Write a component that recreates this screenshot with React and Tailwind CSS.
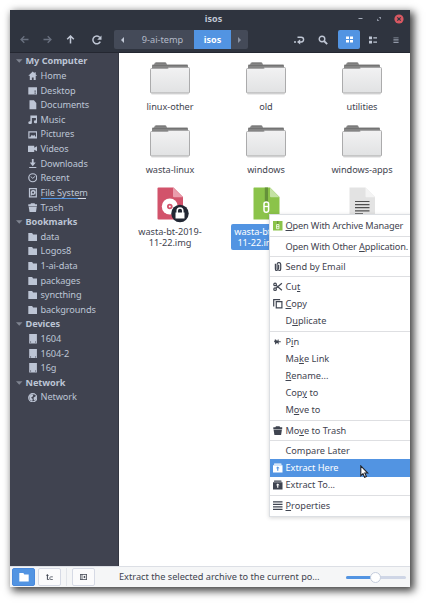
import React from "react";

const Svg = ({ children, className = "", box = "0 0 16 16" }) => (
  <svg viewBox={box} className={"block shrink-0 " + className} fill="currentColor" aria-hidden="true">
    {children}
  </svg>
);

const stroke = { fill: "none", stroke: "currentColor", strokeWidth: 2 };

const glyphs = {
  home: <path d="M8 1L0.500 8H3v7h3.500v-4h3v4H13V8h2.500L13 5.700V2h-2v1.800z" />,
  desktop: <path fillRule="evenodd" d="M.5 2h15v12.500H.5zM11 7.500v2.200h2V7.500zM11 10.800v2.200h2v-2.200z" />,
  documents: <path d="M2.500.5H10l4 4.500V15.500H2.500z" />,
  music: <path fillRule="evenodd" d="M4 1h11.500v10.500a2.800 2.500 0 1 1-2.200-2.400V5H6.500v8a3 2.500 0 1 1-2.500-2.500z" />,
  pictures: <path fillRule="evenodd" d="M.5 2h15v12.500H.5zM2.500 4v8h1l3-4 2 2 2-2 3 4V4z" />,
  videos: <path d="M0 3h10.500v3.500L16 3.500v9l-5.500-3V13.500H0z" />,
  downloads: <path d="M6.500 0h3v6H13l-5 6-5-6h3.500zM2 13.500h12V16H2z" />,
  recent: (
    <g {...stroke}>
      <circle cx="8" cy="8" r="6.700" />
      <path d="M4.500 6L8 9l4-3.500" strokeWidth="1.600" />
    </g>
  ),
  filesystem: (
    <>
      <path fillRule="evenodd" d="M1.500 0h13.500v16H1.500zM3.500 2v12h9.500V2z" />
      <path fillRule="evenodd" d="M8.500 3.200a4.200 4.200 0 1 1-1 8.200L4.500 13.500V7.500a4 4 0 0 1 4-4.300zM8.500 6a1.600 1.600 0 1 0 .1 0z" />
    </>
  ),
  trash: <path d="M5 .3h6l1 1.700h3.500v3.500H.5V2H4zM1.200 6.200h13.600L13.300 16H2.700z" />,
  folder: <path d="M.5 1.500h6.500l1.500 2.500h7V15H.5z" />,
  drive: <path fillRule="evenodd" d="M2 0h13v16H2zM3.500 12.500v1.700h1.700v-1.700zM12 12.500v1.700h1.500v-1.700z" />,
  network: (
    <>
      <circle cx="8" cy="8" r="6.800" {...stroke} />
      <path d="M2 5l4-3 3 1-1 3-3 2 3 2-1 4-4-3zM9.500 7.500l4-2.500 1 4-3 4-2-2z" />
    </>
  ),
};

const places = [
  ["My Computer", [["Home", "home"], ["Desktop", "desktop"], ["Documents", "documents"], ["Music", "music"], ["Pictures", "pictures"], ["Videos", "videos"], ["Downloads", "downloads"], ["Recent", "recent"], ["File System", "filesystem"], ["Trash", "trash"]]],
  ["Bookmarks", [["data", "folder"], ["Logos8", "folder"], ["1-ai-data", "folder"], ["packages", "folder"], ["syncthing", "folder"], ["backgrounds", "folder"]]],
  ["Devices", [["1604", "drive"], ["1604-2", "drive"], ["16g", "drive"]]],
  ["Network", [["Network", "network"]]],
];

function Sidebar() {
  return (
    <aside className="w-[109px] shrink-0 border-r border-[#343742] bg-[#404350] pt-[1px] text-[#bdc5d5]">
      {places.map(([title, items]) => (
        <section key={title}>
          <h2 className="flex h-[14.610px] items-center pl-[6px] text-[9.200px] font-bold tracking-[-0.050px]">
            <Svg box="0 0 7 4" className="mr-[3px] h-[4px] w-[6.500px] text-[#7f8491]"><path d="M0 0h7L3.500 4z" /></Svg>
            {title}
          </h2>
          {items.map(([name, icon]) => (
            <div key={name} className="flex h-[14.610px] items-center pl-[17.500px] tracking-[-0.100px]">
              <Svg className="mr-[3.500px] size-[9.500px]">{glyphs[icon]}</Svg>
              {icon === "filesystem" ? (
                <span className="relative">
                  {name}
                  <span className="absolute bottom-[1px] left-0 flex h-[1px] w-[45px] bg-[#d5dae4]"><span className="w-[37px] bg-[#5294e2]" /></span>
                </span>
              ) : (
                <span>{name}</span>
              )}
            </div>
          ))}
        </section>
      ))}
    </aside>
  );
}

function Header() {
  return (
    <header className="h-[43px] shrink-0 border-b border-[#242731] bg-[#2f343f] text-[#c0c7d5]">
      <div className="relative flex h-[20px] items-center justify-end">
        <h1 className="absolute inset-x-0 top-[3px] pl-[7px] text-center text-[9px] leading-[12px] font-bold">isos</h1>
        <Svg className="mt-[-3px] mr-[14px] size-[5px] text-[#a5acba]" box="0 0 5 5"><path d="M.5 2h4v1h-4z" /></Svg>
        <Svg className="mt-[-3px] mr-[13px] size-[4px] text-[#8f96a4]" box="0 0 5 5"><path d="M2 0h3v3zM0 2l3 3H0z" /></Svg>
        <Svg className="mt-[-3px] mr-[6px] size-[10px]" box="0 0 10 10">
          <circle cx="5" cy="5" r="4.600" fill="#d85862" />
          <path d="M3.300 3.300l3.400 3.400M6.700 3.300L3.300 6.700" stroke="#2f343f" strokeWidth="1.200" />
        </Svg>
      </div>
      <div className="flex h-[19px] items-center">
        <div className="flex w-[104px] items-center">
          <Svg className="ml-[10px] size-[9px] text-[#69707f]" box="0 0 9 9"><path d="M8.500 4.500H1M4.300 1.200L1 4.500l3.300 3.300" {...stroke} strokeWidth="1.300" /></Svg>
          <Svg className="ml-[14px] size-[9px] text-[#69707f]" box="0 0 9 9"><path d="M.5 4.500H8M4.700 1.200L8 4.500 4.700 7.800" {...stroke} strokeWidth="1.300" /></Svg>
          <Svg className="ml-[14px] size-[9px]" box="0 0 9 9"><path d="M4.500 8.500V1M1.200 4.300L4.500 1l3.300 3.300" {...stroke} strokeWidth="1.500" /></Svg>
          <Svg className="ml-[17px] size-[10px]" box="0 0 10 10"><path d="M8.300 6.700a3.900 3.900 0 1 1-.5-4.300" {...stroke} strokeWidth="1.500" /><path d="M9.500.4v4.400H5.200z" /></Svg>
        </div>
        <nav className="flex h-[19px] overflow-hidden rounded-[2px] bg-[#444a58]">
          <span className="flex w-[17px] items-center justify-center"><Svg className="h-[6px] w-[3px]" box="0 0 3 6"><path d="M3 0v6L0 3z" /></Svg></span>
          <span className="flex w-[63px] items-center justify-center text-[#b3bac8]">9-ai-temp</span>
          <span className="flex w-[37px] items-center justify-center bg-[#5294e2] text-[9px] font-bold text-white">isos</span>
          <span className="flex w-[17px] items-center justify-center text-[#8a91a0]"><Svg className="h-[6px] w-[3px]" box="0 0 3 6"><path d="M0 0v6l3-3z" /></Svg></span>
        </nav>
        <Svg className="ml-[46px] h-[10px] w-[11px]" box="0 0 11 10">
          <path d="M3.500 2.200h3.700a2.400 2.400 0 0 1 0 4.800H5.500" {...stroke} strokeWidth="1.400" />
          <path d="M6.200 4.300v5.300L3 7zM0 6.300h2v1.500H0z" />
        </Svg>
        <Svg className="ml-[13px] size-[10px]" box="0 0 10 10">
          <circle cx="4" cy="4" r="2.800" {...stroke} strokeWidth="1.400" /><path d="M6 6l3.200 3.200" {...stroke} strokeWidth="1.800" />
        </Svg>
        <span className="ml-[10px] flex h-[19px] w-[22px] items-center justify-center rounded-[2px] bg-[#5294e2] text-white">
          <Svg className="size-[7px]" box="0 0 7 7"><path d="M0 .5h3v2.500H0zM4 .5h3v2.500H4zM0 4h3v2.500H0zM4 4h3v2.500H4z" /></Svg>
        </span>
        <Svg className="ml-[8.500px] h-[8px] w-[8px]" box="0 0 8 8"><path d="M0 .5h3v2.800H0zM4.300 1.200H8v1.300H4.300zM0 4.700h3v2.800H0zM4.300 5.400H8v1.300H4.300z" /></Svg>
        <Svg className="ml-[16.500px] h-[6px] w-[6px] text-[#9299a8]" box="0 0 6 7"><path d="M0 .5h6v1H0zM0 2.300h6v1H0zM0 4.100h6v1H0zM0 5.900h6v1H0z" /></Svg>
      </div>
    </header>
  );
}

const Folder = () => (
  <Svg className="h-[33px] w-[42px]" box="0 0 42 33">
    <defs>
      <linearGradient id="paper" x1="0" y1="0" x2="0" y2="1"><stop offset="0" stopColor="#f2f2f3" /><stop offset="1" stopColor="#e1e2e3" /></linearGradient>
    </defs>
    <path d="M3 8V3.500q0-1 1-1h1l1-2h11l1 2h20q1 0 1 1V8z" fill="#858585" />
    <path d="M4 3.500h34M7 1h9.500" stroke="#6f6f6f" strokeWidth=".8" />
    <path d="M1.500 7.500q0-1 1-1h16l1.500-1h19.500q1 0 1 1v23.500q0 1-1 1h-37q-1 0-1-1z" fill="url(#paper)" stroke="#a3a3a4" strokeWidth=".9" />
    <path d="M2.500 32h37" stroke="#c9c9c9" strokeWidth=".7" />
  </Svg>
);

const DiskImage = () => (
  <Svg className="h-[36px] w-[42px]" box="0 0 42 36">
    <path d="M9.500.5h15L34 10v21.500q0 1-1 1H9.500q-1 0-1-1v-30q0-1 1-1z" fill="#d2536b" />
    <path d="M24 .5L34 10.300H25q-1 0-1-1z" fill="#ea9dac" />
    <circle cx="20.800" cy="19.500" r="8" fill="#fff" />
    <circle cx="20.800" cy="19.500" r="2.800" fill="#d2536b" /><circle cx="20.800" cy="19.500" r="1" fill="#fff" />
    <circle cx="31" cy="26.500" r="8.700" fill="#222733" />
    <path d="M26.500 25.500h9v6h-9z" fill="#fff" />
    <path d="M28.200 26v-2.200a2.800 2.800 0 0 1 5.600 0V26" fill="none" stroke="#fff" strokeWidth="1.500" />
  </Svg>
);

const Archive = () => (
  <Svg className="h-[36px] w-[42px]" box="0 0 42 36">
    <path d="M9 .5h16L34.500 10v22.500H8.500V1z" fill="#8bc34a" />
    <path d="M25 .5L34.500 10.300H26q-1 0-1-1z" fill="#c4e2a4" />
    <path d="M19.800.5h3.200V15h-3.200z" fill="#65913a" />
    <path d="M19 17a2.300 2 0 0 1 4.600 0v6a2.300 2.300 0 0 1-4.600 0z" fill="none" stroke="#fff" strokeWidth="1.500" />
    <path d="M19 19.500h4.500" stroke="#fff" strokeWidth="1.300" />
  </Svg>
);

const TextFile = () => (
  <Svg className="h-[36px] w-[42px]" box="0 0 42 36">
    <path d="M8.500.5h16L34 10v22.500H8.500z" fill="#e3e3e3" /><path d="M24.500.5L34 10.300h-8.500q-1 0-1-1z" fill="#f4f4f4" />
    <path d="M14 14.500h14.500M14 17.600h14.500M14 20.700h14.500M14 23.800h14.500M14 26.900h8" stroke="#505050" strokeWidth="1.200" />
  </Svg>
);

function Files() {
  const rows = [["linux-other", "old", "utilities"], ["wasta-linux", "windows", "windows-apps"]];
  return (
    <main className="flex-1 bg-white pt-[8px] pl-[3px] tracking-[-0.050px] text-[#3f4450]">
      {rows.map((row) => (
        <div key={row[0]} className="grid h-[62.500px] grid-cols-[96px_96px_96px]">
          {row.map((name) => (
            <div key={name} className="flex flex-col items-center pt-[1px]">
              <Folder />
              <span className="mt-[6px] leading-[12px]">{name}</span>
            </div>
          ))}
        </div>
      ))}
      <div className="grid grid-cols-[96px_96px_96px] pt-[1px] leading-[11px]">
        <div className="flex flex-col items-center"><DiskImage /><span className="mt-[3px] text-center">wasta-bt-2019-<br />11-22.img</span></div>
        <div className="flex flex-col items-center"><Archive /><span className="mt-[1px] h-[26px] rounded-[2px] bg-[#5294e2] px-[3px] pt-[2px] text-center text-white">wasta-bt-2019-<br />11-22.img.zip</span></div>
        <div className="flex flex-col items-center"><TextFile /></div>
      </div>
    </main>
  );
}

const menuIcons = {
  archive: <><path d="M0 0h16v16H0z" fill="#8bc34a" /><path d="M7 0h2v5H7z" fill="#65913a" /><path d="M6 6h4v7H6zM6 9.500h4" fill="none" stroke="#fff" strokeWidth="1.300" /></>,
  clip: <path d="M9.500 4.500v6.500a1.300 1.300 0 0 1-2.600 0V4a3 3 0 0 1 6.100 0v7a4.500 4.500 0 0 1-9 0V3" {...stroke} />,
  cut: <><path d="M5 5.500L15 14M5 10.500L15 2" {...stroke} /><circle cx="3.500" cy="4" r="2.200" {...stroke} /><circle cx="3.500" cy="12" r="2.200" {...stroke} /></>,
  copy: <path d="M5.500 4.500h9.500v10.500H5.500zM12 1H1.200v11.500" {...stroke} />,
  pin: <path d="M3 4h2l1 2h2V4h1.500v3H13v2H9.500v3H8v-2H6l-1 2H3.500V9H2V6.500h1z" />,
  trash: <path d="M5 .5h6l1 1.500h3.500v3.500H.5V2H4zM1 6.300h14L13.500 16h-11z" />,
  extract: <path fillRule="evenodd" d="M2 .8h12l.5 2h-13zM0 3.800h16v12H0zM8 6L4.800 9H7v4h2V9h2.200z" />,
  lines: <path d="M0 .5h16v2H0zM0 4.700h16v2H0zM0 8.900h16v2H0zM0 13.100h16v2H0z" />,
};

const menu = [
  [["", "O", "pen With Archive Manager", "archive"]],
  [["Open With Other ", "A", "pplication."]],
  [["Send by Email", "", "", "clip"]],
  [["Cu", "t", "", "cut"], ["", "C", "opy", "copy"], ["D", "u", "plicate"]],
  [["P", "i", "n", "pin"], ["Ma", "k", "e Link"], ["", "R", "ename..."], ["Cop", "y", " to"], ["M", "o", "ve to"]],
  [["Mo", "v", "e to Trash", "trash"]],
  [["Compare Later", "", ""], ["Extract Here", "", "", "extract"], ["Extract To...", "", "", "extract"]],
  [["", "P", "roperties", "lines"]],
];

function ContextMenu() {
  return (
    <div className="absolute top-[204px] left-[258.500px] w-[160px] border border-[#dcdfe3] bg-white pt-[2.500px] pb-[1.500px] text-[#3f4450] shadow-[0_1px_4px_rgba(0,0,0,0.16)]">
      {menu.map((group, i) => (
        <div key={i} className={i ? "mt-[1.100px] border-t border-[#dedfe2] pt-[1.100px]" : ""}>
          {group.map(([before, key, after, icon]) => (
            <div
              key={before + key + after}
              className={
                "flex h-[17.150px] items-center pl-[3.500px] whitespace-pre " +
                (i < 2 ? "tracking-[-0.150px] " : "") +
                (before === "Extract Here" ? "bg-[#5294e2] text-white" : "")
              }
            >
              <span className="w-[12.500px]">{icon && <Svg className="size-[9.500px]">{menuIcons[icon]}</Svg>}</span>
              <span>{before}<span className="underline decoration-[0.700px] underline-offset-[1px]">{key}</span>{after}</span>
            </div>
          ))}
        </div>
      ))}
    </div>
  );
}

function StatusBar() {
  const button = "flex h-[18px] w-[23px] items-center justify-center rounded-[2px] border ";
  return (
    <footer className="flex h-[21px] shrink-0 items-center border-t border-[#dcdfe5] bg-[#f5f6f7] pl-[2px] text-[#3f4450]">
      <span className={button + "border-[#4a89dc] bg-[#5294e2] text-white"}><Svg className="size-[10px]">{glyphs.folder}</Svg></span>
      <span className={button + "ml-[3px] border-[#d6dae5] bg-[#fbfbfc]"}><Svg className="size-[7px]" box="0 0 7 7"><path d="M1.200 0l1.800 1.800H1.900V5h1.300v.8H.9V1.800H0zM4.300 2.500h2.500v.8H4.300zM3.500 3.200h.8V5.200h-.8zM4.300 5h2.500v.8H4.300z" /></Svg></span>
      <span className="mx-[5px] h-[18px] w-px bg-[#e2e5ea]" />
      <span className={button + "border-[#d6dae5] bg-[#fbfbfc]"}><Svg className="h-[6px] w-[7px]" box="0 0 8 7"><path fillRule="evenodd" d="M0 0h8v7H0zM.8.9v5.200h1V.9zM2.700.9v5.200h4.400V.9zM6 1.700v3.600L3.600 3.500z" /></Svg></span>
      <span className="ml-[24px] w-[227px] whitespace-pre">Extract the selected archive to the current po…</span>
      <span className="relative flex h-[3px] w-[60px] rounded-full bg-[#cfd6e6]">
        <span className="w-[30px] rounded-full bg-[#5294e2]" />
        <span className="absolute top-[-4px] left-[24px] size-[11px] rounded-full border border-[#c5cddd] bg-white" />
      </span>
    </footer>
  );
}

const Pointer = () => (
  <Svg className="absolute top-[455px] left-[350px] h-[13px] w-[9px]" box="0 0 9 13">
    <path d="M.8.9v9.800l2.200-2 1.600 3.600 1.800-.8-1.600-3.500h3z" fill="#fff" stroke="#20242c" strokeWidth="1.100" />
  </Svg>
);

export default function App() {
  return (
    <div className="h-[603px] w-[426px] overflow-hidden bg-white pt-[10px] pl-[10px] font-['Noto_Sans','Open_Sans',sans-serif] text-[9.200px]">
      <div className="h-[577px] w-[400px] shadow-[3px_3px_8px_1px_rgba(0,0,0,0.75)]">
        <div className="relative flex h-full flex-col overflow-hidden">
          <Header />
          <div className="flex min-h-0 flex-1"><Sidebar /><Files /></div>
          <StatusBar />
          <ContextMenu />
          <Pointer />
        </div>
      </div>
    </div>
  );
}
